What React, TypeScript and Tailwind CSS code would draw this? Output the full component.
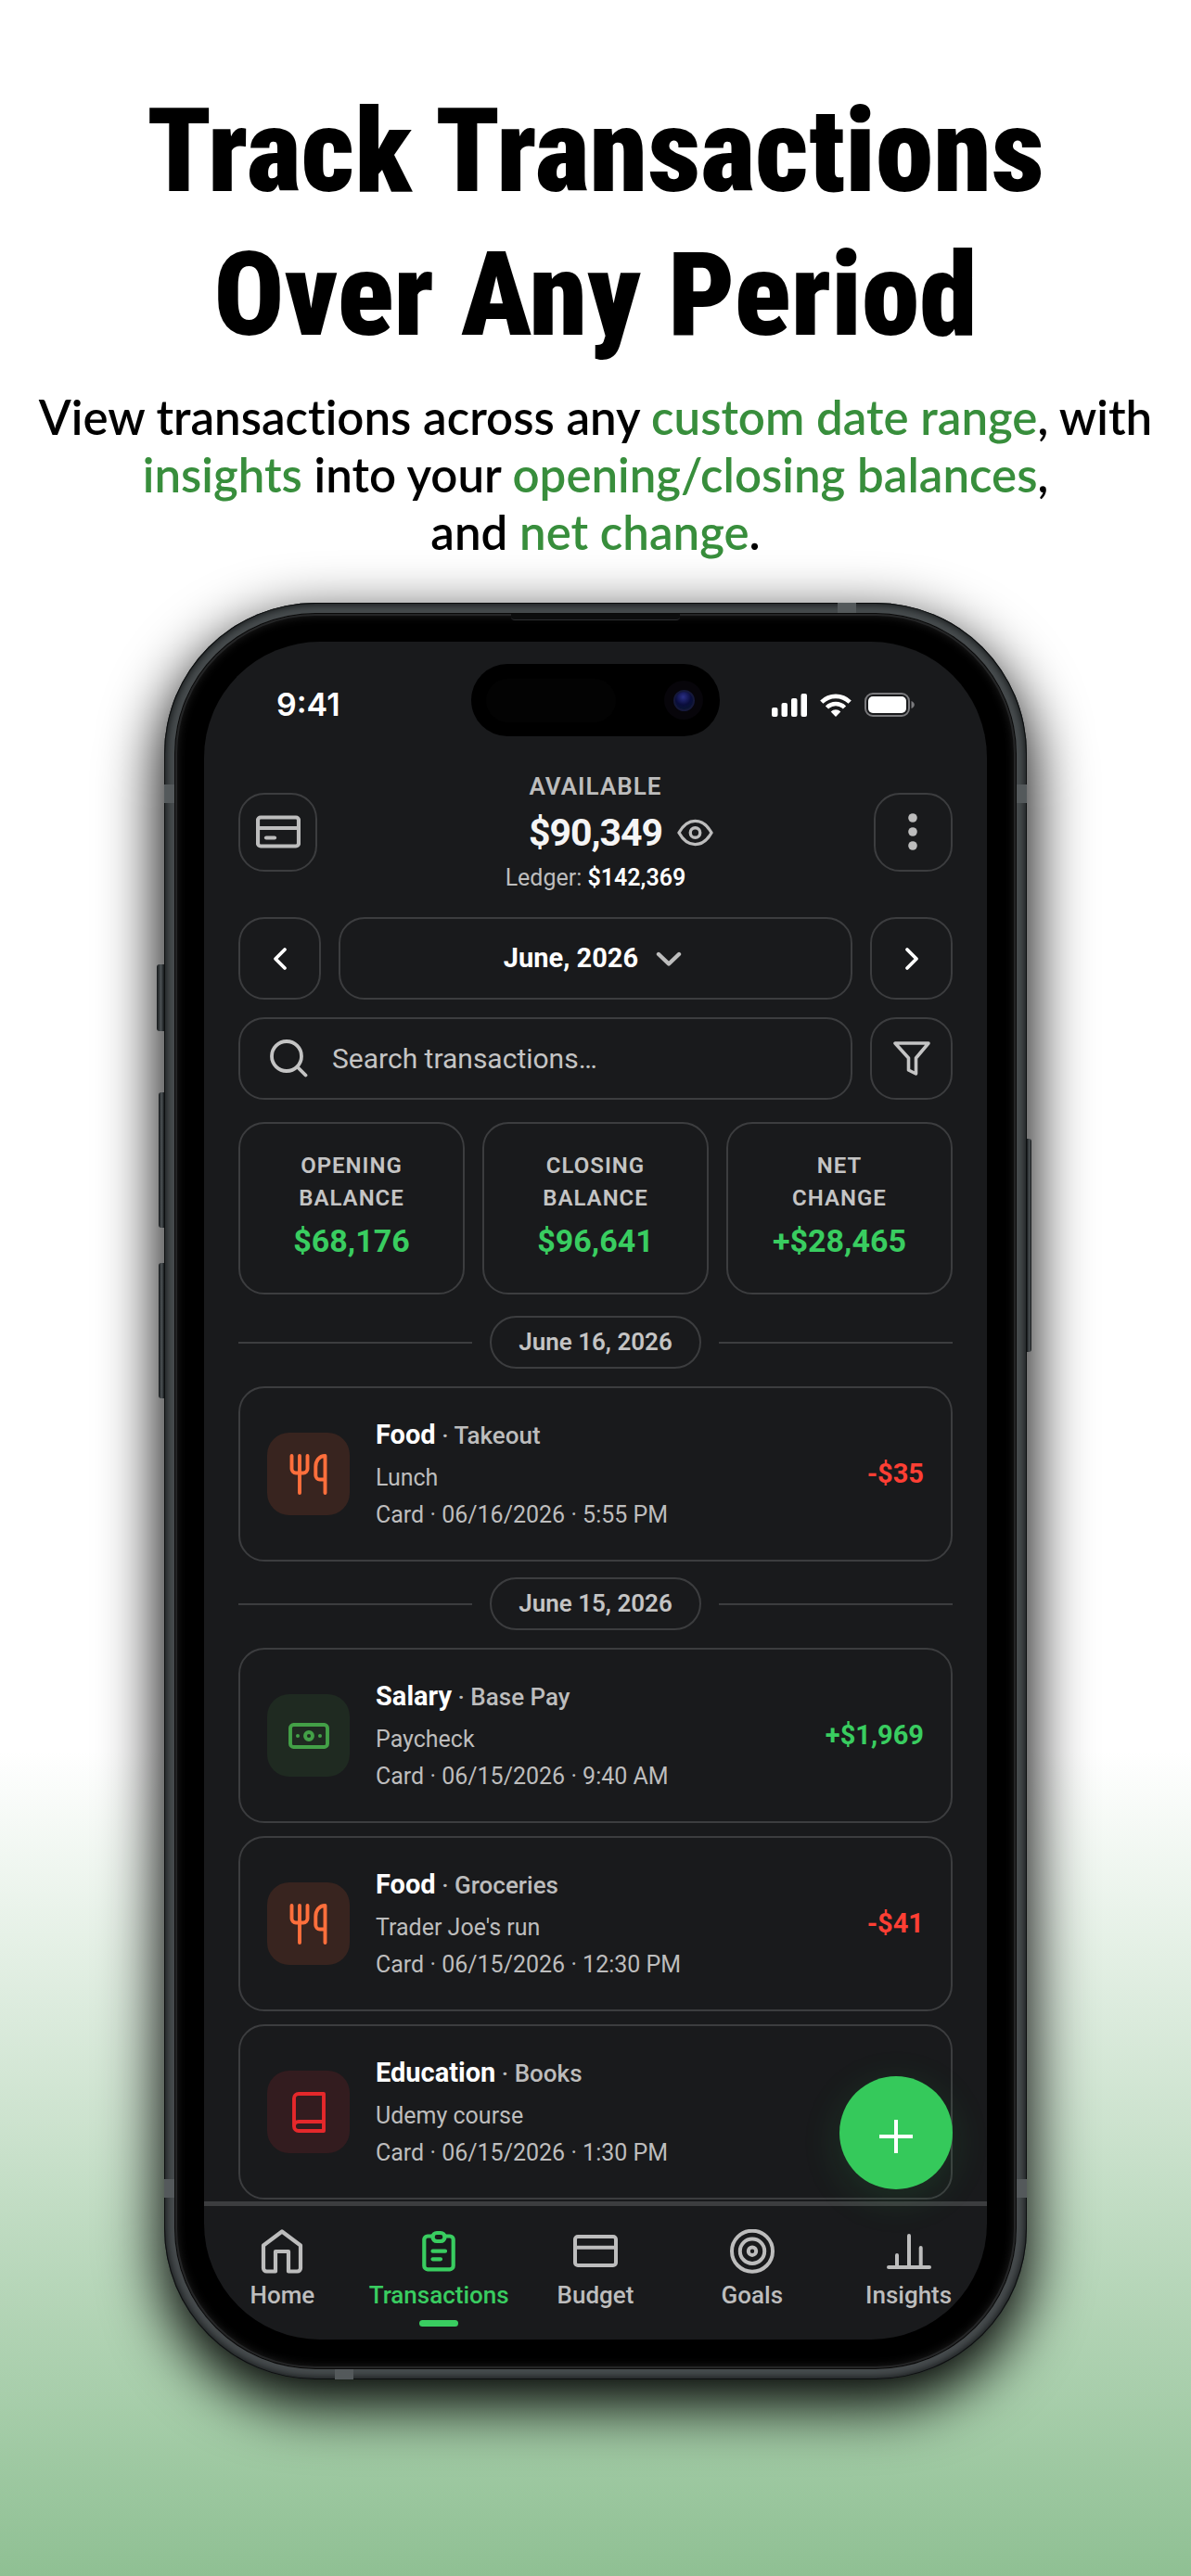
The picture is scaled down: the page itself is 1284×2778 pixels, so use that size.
import React, { useState } from 'react';

type IconProps = { className?: string };

const CardIcon = ({ className }: IconProps) => (
  <svg viewBox="0 0 48 48" className={className} fill="none" stroke="currentColor" strokeWidth="4.2" strokeLinecap="round">
    <rect x="2" y="8.5" width="44" height="31" rx="3" />
    <path d="M2 20h44" />
    <path d="M11 30.5h9" />
  </svg>
);

const DotsIcon = ({ className }: IconProps) => (
  <svg viewBox="0 0 48 48" className={className} fill="currentColor">
    <circle cx="24" cy="9" r="4.8" />
    <circle cx="24" cy="24" r="4.8" />
    <circle cx="24" cy="39" r="4.8" />
  </svg>
);

const EyeIcon = ({ className }: IconProps) => (
  <svg viewBox="0 0 40 30" className={className} fill="none" stroke="currentColor" strokeWidth="3.4" strokeLinejoin="round">
    <path d="M2 15C7 6 13 2 20 2s13 4 18 13c-5 9-11 13-18 13S7 24 2 15Z" />
    <circle cx="20" cy="15" r="5.4" />
  </svg>
);

const ChevronLeft = ({ className }: IconProps) => (
  <svg viewBox="0 0 24 28" className={className} fill="none" stroke="currentColor" strokeWidth="3.8" strokeLinecap="round" strokeLinejoin="round">
    <path d="M17 4 7 14l10 10" />
  </svg>
);

const ChevronRight = ({ className }: IconProps) => (
  <svg viewBox="0 0 24 28" className={className} fill="none" stroke="currentColor" strokeWidth="3.8" strokeLinecap="round" strokeLinejoin="round">
    <path d="m7 4 10 10L7 24" />
  </svg>
);

const ChevronDown = ({ className }: IconProps) => (
  <svg viewBox="0 0 28 18" className={className} fill="none" stroke="currentColor" strokeWidth="4.4" strokeLinecap="round" strokeLinejoin="round">
    <path d="m3 4 11 10.500L25 4" />
  </svg>
);

const SearchIcon = ({ className }: IconProps) => (
  <svg viewBox="0 0 41 41" className={className} fill="none" stroke="currentColor" strokeWidth="3.8" strokeLinecap="round">
    <circle cx="18" cy="18" r="16" />
    <path d="m29.5 29.5 9 9" />
  </svg>
);

const FilterIcon = ({ className }: IconProps) => (
  <svg viewBox="0 0 40 37" className={className} fill="none" stroke="currentColor" strokeWidth="3.6" strokeLinejoin="round">
    <path d="M2 2h36L24.5 18v17l-8-4V18Z" />
  </svg>
);

const ForkIcon = ({ className }: IconProps) => (
  <svg viewBox="0 0 44 44" className={className} fill="none" stroke="currentColor" strokeWidth="3.9" strokeLinecap="round" strokeLinejoin="round">
    <path d="M3.5 2v14A4.5 4.5 0 0 0 8 20.500h8a4.500 4.500 0 0 0 4.500-4.500V2" />
    <path d="M12 2v40" />
    <path d="M39.500 42V2c-6.500 0-10.200 5.500-10.200 12v9a4.500 4.500 0 0 0 4.500 4.500h5.700" />
  </svg>
);

const CashIcon = ({ className }: IconProps) => (
  <svg viewBox="0 0 44 44" className={className} fill="none" stroke="currentColor" strokeWidth="3.9">
    <rect x="2" y="10" width="40" height="24" rx="3.500" />
    <circle cx="22" cy="22" r="4" />
    <circle cx="10" cy="22" r="2" fill="currentColor" stroke="none" />
    <circle cx="34" cy="22" r="2" fill="currentColor" stroke="none" />
  </svg>
);

const BookIcon = ({ className }: IconProps) => (
  <svg viewBox="0 0 44 44" className={className} fill="none" stroke="currentColor" strokeWidth="3.9" strokeLinejoin="round">
    <path d="M38 32H11a5 5 0 0 0 0 10h27V2H11a5 5 0 0 0-5 5v30" />
  </svg>
);

const HomeIcon = ({ className }: IconProps) => (
  <svg viewBox="0 0 48 51" className={className} fill="none" stroke="currentColor" strokeWidth="4.2" strokeLinejoin="round">
    <path d="M4 17.500 24 2.500l20 15V42a3.500 3.500 0 0 1-3.500 3.500H31V24H17v21.500H7.500A3.500 3.500 0 0 1 4 42Z" />
  </svg>
);

const ClipboardIcon = ({ className }: IconProps) => (
  <svg viewBox="0 0 48 51" className={className} fill="none" stroke="currentColor" strokeWidth="4.2" strokeLinecap="round" strokeLinejoin="round">
    <path d="M17.500 7.500H12A3.800 3.800 0 0 0 8.300 11v28.500a3.800 3.800 0 0 0 3.700 3.800h24a3.800 3.800 0 0 0 3.700-3.800V11A3.800 3.800 0 0 0 36 7.500h-5.500" />
    <rect x="17.500" y="4" width="13" height="9" rx="4.500" />
    <path d="M17.500 23.700h13.500M17.500 32.300h8.500" />
  </svg>
);

const BudgetIcon = ({ className }: IconProps) => (
  <svg viewBox="0 0 48 51" className={className} fill="none" stroke="currentColor" strokeWidth="4">
    <rect x="2" y="8" width="44" height="31" rx="3" />
    <path d="M2 19.700h44" />
  </svg>
);

const GoalsIcon = ({ className }: IconProps) => (
  <svg viewBox="0 0 48 51" className={className} fill="none" stroke="currentColor" strokeWidth="4">
    <circle cx="24" cy="23.700" r="22" />
    <circle cx="24" cy="23.700" r="13.200" />
    <circle cx="24" cy="23.700" r="4.200" />
  </svg>
);

const InsightsIcon = ({ className }: IconProps) => (
  <svg viewBox="0 0 48 51" className={className} fill="none" stroke="currentColor" strokeWidth="4" strokeLinecap="round">
    <path d="M2 41h44M11 41V28M24 41V7M36.700 41V20" />
  </svg>
);

const SignalIcon = () => (
  <svg viewBox="0 0 38 25" className="w-[38px] h-[25px]" fill="white">
    <rect x="0" y="15" width="6.500" height="10" rx="2" />
    <rect x="10.500" y="10" width="6.500" height="15" rx="2" />
    <rect x="21" y="5" width="6.500" height="20" rx="2" />
    <rect x="31.500" y="0" width="6.500" height="25" rx="2" />
  </svg>
);

const WifiIcon = () => (
  <svg viewBox="0 0 34 25" className="w-[34px] h-[25px]" fill="none" stroke="white" strokeWidth="4.600">
    <path d="M1.800 9.200a21.500 21.500 0 0 1 30.400 0" />
    <path d="M7.500 15a13.400 13.400 0 0 1 19 0" />
    <path d="M17 25l-5.300-5.500a7.600 7.600 0 0 1 10.600 0Z" fill="white" stroke="none" />
  </svg>
);

const BatteryIcon = () => (
  <svg viewBox="0 0 54 26" className="w-[54px] h-[26px]">
    <rect x="1" y="1" width="47" height="24" rx="8" fill="none" stroke="#7a7a7d" strokeWidth="2" />
    <rect x="4" y="4" width="41" height="18" rx="5" fill="white" />
    <path d="M50.500 9c2.200.8 3.300 2.400 3.300 4s-1.100 3.200-3.300 4Z" fill="#7a7a7d" />
  </svg>
);

interface Transaction {
  category: string;
  sub: string;
  note: string;
  meta: string;
  amount: string;
  kind: 'food' | 'salary' | 'education';
}

const groups: { date: string; items: Transaction[] }[] = [
  {
    date: 'June 16, 2026',
    items: [{ category: 'Food', sub: 'Takeout', note: 'Lunch', meta: 'Card · 06/16/2026 · 5:55 PM', amount: '-$35', kind: 'food' }],
  },
  {
    date: 'June 15, 2026',
    items: [
      { category: 'Salary', sub: 'Base Pay', note: 'Paycheck', meta: 'Card · 06/15/2026 · 9:40 AM', amount: '+$1,969', kind: 'salary' },
      { category: 'Food', sub: 'Groceries', note: "Trader Joe's run", meta: 'Card · 06/15/2026 · 12:30 PM', amount: '-$41', kind: 'food' },
      { category: 'Education', sub: 'Books', note: 'Udemy course', meta: 'Card · 06/15/2026 · 1:30 PM', amount: '', kind: 'education' },
    ],
  },
];

const kindStyles = {
  food: { box: 'bg-[#38241f] text-[#ff6f3c]', Icon: ForkIcon },
  salary: { box: 'bg-[#1f2a21] text-[#43a047]', Icon: CashIcon },
  education: { box: 'bg-[#331c1f] text-[#e5282b]', Icon: BookIcon },
};

const stats = [
  { top: 'OPENING', bottom: 'BALANCE', value: '$68,176' },
  { top: 'CLOSING', bottom: 'BALANCE', value: '$96,641' },
  { top: 'NET', bottom: 'CHANGE', value: '+$28,465' },
];

const tabs = [
  { label: 'Home', Icon: HomeIcon },
  { label: 'Transactions', Icon: ClipboardIcon },
  { label: 'Budget', Icon: BudgetIcon },
  { label: 'Goals', Icon: GoalsIcon },
  { label: 'Insights', Icon: InsightsIcon },
];

const outline = 'border-2 border-[#3c3d3f]';

const StatusBar = () => (
  <div className="flex items-center px-[78px] pt-6 pb-[37px]">
    <div className="flex-1 pt-[10px] font-['Inter',sans-serif] text-[34px] leading-[42px] font-semibold text-white">9:41</div>
    <div className="w-[268px] h-[78px] rounded-full bg-black flex items-center justify-between pl-4 pr-[18px]">
      <div className="w-[140px] h-[47px] rounded-full bg-[#030303]" />
      <div className="w-[42px] h-[42px] rounded-full bg-[#07050a] flex items-center justify-center">
        <div className="w-[23px] h-[23px] rounded-full border-2 border-[#15183a] bg-[radial-gradient(circle_at_45%_30%,#2a2f86,#0a0d3c_50%,#071a2a)]" />
      </div>
    </div>
    <div className="flex-1 pt-[10px] flex items-center justify-end gap-[14px]">
      <SignalIcon />
      <WifiIcon />
      <BatteryIcon />
    </div>
  </div>
);

const Header = () => (
  <header className="flex items-center justify-between px-[37px]">
    <button aria-label="Accounts" className={`w-[85px] h-[85px] rounded-[28px] flex items-center justify-center text-[#bdbdbd] ${outline}`}>
      <CardIcon className="w-12 h-12" />
    </button>
    <div className="text-center">
      <div className="text-[26px] leading-[34px] font-semibold tracking-[1px] text-[#bdbdbd]">AVAILABLE</div>
      <div className="relative w-fit mx-auto text-[41px] leading-[66px] font-bold tracking-[-1px] text-[#f5f5f5]">
        $90,349
        <button aria-label="Hide balance" className="absolute left-full top-0 h-full ml-4 flex items-center text-[#bdbdbd]">
          <EyeIcon className="w-[39px] h-[30px]" />
        </button>
      </div>
      <div className="text-[25px] leading-8 text-[#bdbdbd]">
        Ledger: <span className="font-semibold text-white">$142,369</span>
      </div>
    </div>
    <button aria-label="More" className={`w-[85px] h-[85px] rounded-[28px] flex items-center justify-center text-[#bdbdbd] ${outline}`}>
      <DotsIcon className="w-12 h-12" />
    </button>
  </header>
);

const DateDivider = ({ date }: { date: string }) => (
  <div className="flex items-center gap-[19px]">
    <div className="flex-1 h-[2px] bg-[#3c3d3f]" />
    <div className={`w-[228px] h-[57px] rounded-full flex items-center justify-center whitespace-nowrap text-[26px] font-semibold text-[#c4c4c4] ${outline}`}>
      {date}
    </div>
    <div className="flex-1 h-[2px] bg-[#3c3d3f]" />
  </div>
);

const TransactionCard = ({ item }: { item: Transaction }) => {
  const { box, Icon } = kindStyles[item.kind];
  return (
    <li className={`min-h-[189px] rounded-[28px] px-[29px] flex items-center ${outline}`}>
      <div className={`w-[89px] h-[89px] rounded-3xl flex items-center justify-center ${box}`}>
        <Icon className="w-11 h-11" />
      </div>
      <div className="flex-1 pl-7 pb-1 text-[25px] leading-10 text-[#bdbdbd]">
        <div className="text-[26px] leading-[52px] font-medium">
          <span className="text-[29px] font-bold text-white">{item.category}</span> · {item.sub}
        </div>
        <div>{item.note}</div>
        <div>{item.meta}</div>
      </div>
      <div className={`text-[29px] font-bold ${item.amount.startsWith('+') ? 'text-[#39cd60]' : 'text-[#ff3f34]'}`}>{item.amount}</div>
    </li>
  );
};

const TabBar = () => {
  const [active, setActive] = useState('Transactions');
  return (
    <nav className="mt-[2px] grid grid-cols-5 border-t-[5px] border-[#3c3d3f] pt-[25px] pb-[14px]">
      {tabs.map(({ label, Icon }) => (
        <button
          key={label}
          onClick={() => setActive(label)}
          className={`flex flex-col items-center text-[26px] leading-8 font-medium ${active === label ? 'text-[#39cd60]' : 'text-[#bdbdbd]'}`}
        >
          <Icon className="w-12 h-[51px]" />
          <span className="mt-1">{label}</span>
          <span className={`mt-[11px] w-[42px] h-[7px] rounded-full ${active === label ? 'bg-[#39cd60]' : ''}`} />
        </button>
      ))}
    </nav>
  );
};

const Screen = () => (
  <div className="relative overflow-hidden rounded-[125px] bg-[#191a1c] font-['Roboto',sans-serif]">
    <StatusBar />
    <Header />

    <main className="px-[37px] pt-[26px]">
      {/* Period picker */}
      <div className="flex gap-[19px]">
        <button aria-label="Previous month" className={`w-[89px] h-[89px] rounded-[28px] flex items-center justify-center text-white ${outline}`}>
          <ChevronLeft className="w-6 h-7" />
        </button>
        <button className={`flex-1 rounded-[28px] pr-[6px] flex items-center justify-center gap-[19px] text-[29px] font-bold text-white ${outline}`}>
          June, 2026
          <ChevronDown className="w-7 h-[18px] text-[#bdbdbd]" />
        </button>
        <button aria-label="Next month" className={`w-[89px] h-[89px] rounded-[28px] flex items-center justify-center text-white ${outline}`}>
          <ChevronRight className="w-6 h-7" />
        </button>
      </div>

      {/* Search */}
      <div className="flex gap-[19px] mt-[19px]">
        <label className={`flex-1 min-w-0 rounded-[28px] flex items-center pl-8 pr-6 gap-[26px] text-[#c4c4c4] ${outline}`}>
          <SearchIcon className="w-[41px] h-[41px] shrink-0" />
          <input
            type="text"
            aria-label="Search transactions"
            placeholder="Search transactions…"
            className="flex-1 min-w-0 bg-transparent outline-none text-[30px] leading-9 text-white placeholder:text-[#c4c4c4]"
          />
        </label>
        <button aria-label="Filter" className={`w-[89px] h-[89px] rounded-[28px] flex items-center justify-center text-[#c4c4c4] ${outline}`}>
          <FilterIcon className="w-10 h-[37px]" />
        </button>
      </div>

      {/* Summary */}
      <div className="grid grid-cols-3 gap-[19px] mt-6">
        {stats.map((s) => (
          <div key={s.top} className={`h-[186px] rounded-[28px] pt-7 text-center text-[24px] leading-[35px] font-semibold tracking-[1px] text-[#c4c4c4] ${outline}`}>
            <div>{s.top}</div>
            <div>{s.bottom}</div>
            <div className="mt-1 text-[34px] leading-[48px] font-bold tracking-normal text-[#39cd60]">{s.value}</div>
          </div>
        ))}
      </div>

      {/* Transactions */}
      <div className="mt-[23px] flex flex-col gap-[17px]">
        {groups.map((g) => (
          <section key={g.date}>
            <DateDivider date={g.date} />
            <ul className="mt-[19px] flex flex-col gap-[14px]">
              {g.items.map((item) => (
                <TransactionCard key={item.meta} item={item} />
              ))}
            </ul>
          </section>
        ))}
      </div>
    </main>

    <TabBar />

    <button
      aria-label="Add transaction"
      className="absolute right-[37px] bottom-[162px] w-[122px] h-[122px] rounded-full bg-[#35c95b] shadow-[0_10px_44px_rgba(53,201,91,0.14)] flex items-center justify-center"
    >
      <svg viewBox="0 0 122 122" className="w-full h-full" stroke="white" strokeWidth="4">
        <path d="M43 65h36M61 47v36" />
      </svg>
    </button>
  </div>
);

const sideButton = 'absolute bg-[linear-gradient(90deg,#15181a,#4b5154_55%,#15181a)]';
const antenna = 'absolute bg-[#54595b]';

const Phone = () => (
  <div className="relative mx-auto w-full max-w-[930px]">
    <div className="rounded-[163px] p-3 bg-[#474c4e] shadow-[0_24px_64px_4px_#000,inset_0_0_0_1px_#0d0f10,inset_0_0_8px_2px_#121516]">
      <div className="rounded-[151px] bg-black px-[31px] pt-[30px] pb-[31px] shadow-[0_0_0_1px_#0a0a0a,inset_0_0_0_2px_#242526,inset_0_0_12px_#2b2b2b]">
        <Screen />
      </div>
    </div>

    {/* Hardware buttons */}
    <span className={`${sideButton} -left-2 top-[390px] w-2 h-[72px] rounded-l-[3px]`} />
    <span className={`${sideButton} -left-[6px] top-[528px] w-[6px] h-[146px] rounded-l-[3px]`} />
    <span className={`${sideButton} -left-[6px] top-[712px] w-[6px] h-[146px] rounded-l-[3px]`} />
    <span className={`${sideButton} -right-[5px] top-[578px] w-[5px] h-[230px] rounded-r-[3px]`} />

    {/* Antenna bands and earpiece */}
    <span className={`${antenna} left-0 top-[196px] w-[11px] h-5`} />
    <span className={`${antenna} right-0 top-[196px] w-[11px] h-5`} />
    <span className={`${antenna} left-0 bottom-[196px] w-[11px] h-5`} />
    <span className={`${antenna} right-0 bottom-[196px] w-[11px] h-5`} />
    <span className={`${antenna} right-[184px] top-0 w-5 h-[11px]`} />
    <span className={`${antenna} left-[184px] bottom-0 w-5 h-[11px]`} />
    <span className="absolute left-1/2 -translate-x-1/2 top-3 w-[182px] h-[7px] rounded-b-[4px] bg-[#0c0d0d] border-b border-[#2c2e30]" />
  </div>
);

export default function App() {
  return (
    <div className="min-h-screen overflow-x-hidden bg-[linear-gradient(180deg,#fff_68%,#8fc093_100%)] pb-[210px]">
      <div className="pt-[86px] px-6 text-center text-black">
        <h1 className="font-['Roboto_Condensed','Roboto',sans-serif] text-[126px] leading-[155px] font-black">
          Track Transactions
          <br />
          Over Any Period
        </h1>
        <p className="mt-[23px] font-['Lato',sans-serif] [font-variant-ligatures:none] text-[51px] leading-[62px] font-semibold">
          View transactions across any <span className="text-[#388e3c]">custom date range</span>, with
          <br />
          <span className="text-[#388e3c]">insights</span> into your <span className="text-[#388e3c]">opening/closing balances</span>,
          <br />
          and <span className="text-[#388e3c]">net change</span>.
        </p>
      </div>
      <div className="mt-[45px]">
        <Phone />
      </div>
    </div>
  );
}
